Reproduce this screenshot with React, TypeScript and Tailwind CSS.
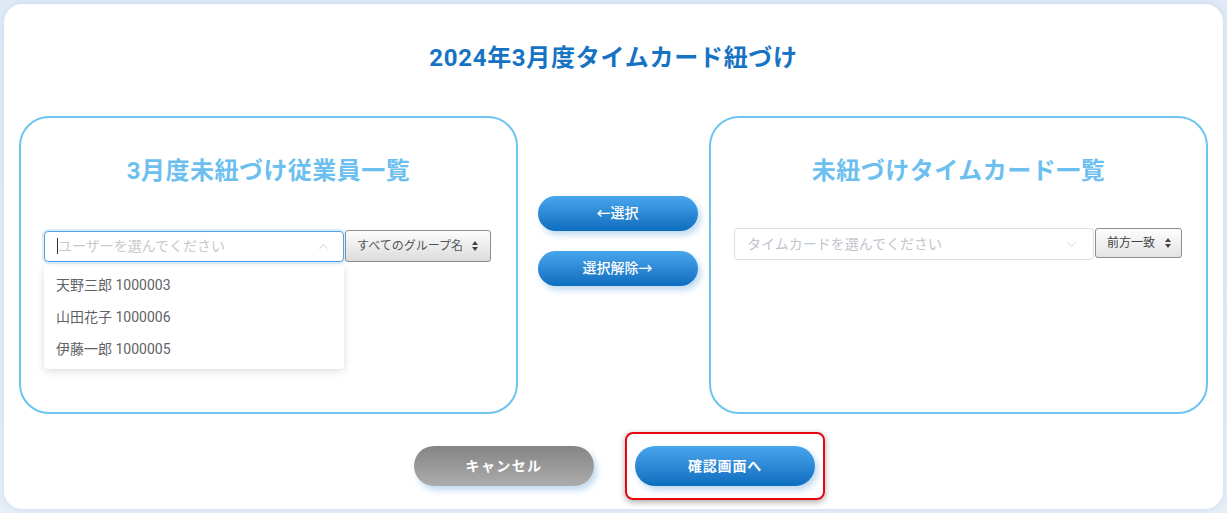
import { ChevronDown, ChevronUp } from "lucide-react";

const font = { fontFamily: "Roboto, 'Noto Sans CJK JP', sans-serif" };

const users = [
  { name: "天野三郎", id: "1000003" },
  { name: "山田花子", id: "1000006" },
  { name: "伊藤一郎", id: "1000005" },
];

function Updown() {
  return (
    <span className="flex flex-col items-center gap-[2px] text-[#444]">
      <span className="block h-0 w-0 border-x-[3.5px] border-b-[4px] border-x-transparent border-b-current" />
      <span className="block h-0 w-0 border-x-[3.5px] border-t-[4px] border-x-transparent border-t-current" />
    </span>
  );
}

function BlueButton({ label, wide = false }: { label: string; wide?: boolean }) {
  return (
    <button
      className={`flex items-center justify-center rounded-full bg-gradient-to-b from-[#48a6ec] to-[#0b6dbf] text-white shadow-[3px_4px_6px_rgba(110,170,220,0.45)] ${
        wide ? "h-[40px] w-[180px] text-[14px] font-bold tracking-[0.06em]" : "h-[35px] w-[160px] text-[14px] font-medium"
      }`}
    >
      {label}
    </button>
  );
}

export default function App() {
  return (
    <div
      className="h-[513px] w-[1227px] bg-gradient-to-b from-[#dfeaf6] to-[#e6eff8] p-[4px]"
      style={font}
    >
      <div className="flex h-[505px] flex-col rounded-[18px] bg-white px-[15px] shadow-[0_0_6px_rgba(180,205,230,0.6)]">
        <h1 className="pt-[39px] text-center text-[24px] leading-[30px] font-bold tracking-[0.03em] text-[#1673c4]">
          2024年3月度タイムカード紐づけ
        </h1>

        <div className="mt-[43px] flex h-[298px] items-stretch">
          {/* left panel */}
          <section className="relative w-[499px] rounded-[30px] border-2 border-[#6cc4ef] px-[23px]">
            <h2 className="pt-[37px] text-center text-[24px] leading-[32px] font-bold tracking-[0.02em] text-[#6cbfee]">
              3月度未紐づけ従業員一覧
            </h2>
            <div className="mt-[43px] flex items-center">
              <div className="relative w-[300px]">
                <div className="flex h-[31px] items-center rounded-[4px] border border-[#4aa2ea] pl-[12px] pr-[12px] shadow-[0_0_0_2px_rgba(74,162,234,0.18)]">
                  <span className="h-[16px] w-px bg-[#333]" />
                  <span className="flex-1 text-[14px] text-[#c8c8c8]">ユーザーを選んでください</span>
                  <ChevronUp size={15} strokeWidth={1.1} className="text-[#bbb]" />
                </div>
                <ul className="absolute top-[35px] left-0 z-10 w-[300px] rounded-[4px] bg-white pt-[4px] pb-[3px] shadow-[0_2px_8px_rgba(0,0,0,0.14)]">
                  {users.map((u) => (
                    <li key={u.id} className="flex h-[32px] items-center px-[12px] text-[14px] text-[#606266]">
                      {u.name} {u.id}
                    </li>
                  ))}
                </ul>
              </div>
              <div className="ml-px flex h-[32px] w-[146px] items-center justify-between rounded-[3px] border border-[#8d8d8d] bg-gradient-to-b from-[#fdfdfd] to-[#dcdcdc] pl-[11px] pr-[12px] text-[12px] text-[#555]">
                <span>すべてのグループ名</span>
                <Updown />
              </div>
            </div>
          </section>

          {/* middle buttons */}
          <div className="flex flex-1 flex-col items-center gap-[20px] pt-[80px] pl-[8px]">
            <BlueButton label="←選択" />
            <BlueButton label="選択解除→" />
          </div>

          {/* right panel */}
          <section className="w-[499px] rounded-[30px] border-2 border-[#6cc4ef] px-[23px]">
            <h2 className="pt-[37px] text-center text-[24px] leading-[32px] font-bold tracking-[0.02em] text-[#6cbfee]">
              未紐づけタイムカード一覧
            </h2>
            <div className="mt-[41px] flex items-start">
              <div className="flex h-[32px] w-[360px] items-center rounded-[4px] border border-[#dcdfe6] pl-[12px] pr-[14px]">
                <span className="flex-1 text-[14px] text-[#c0c4cc]">タイムカードを選んでください</span>
                <ChevronDown size={15} strokeWidth={1.1} className="text-[#c0c4cc]" />
              </div>
              <div className="ml-px flex h-[30px] w-[87px] items-center justify-between rounded-[3px] border border-[#8d8d8d] bg-gradient-to-b from-[#fdfdfd] to-[#e4e4e4] pl-[11px] pr-[10px] text-[12px] text-[#444]">
                <span>前方一致</span>
                <Updown />
              </div>
            </div>
          </section>
        </div>

        {/* footer buttons */}
        <div className="mt-[18px] flex items-center justify-center gap-[31px] pl-[12px]">
          <button className="h-[40px] w-[180px] rounded-full bg-gradient-to-b from-[#858585] to-[#acacac] text-[14px] font-bold tracking-[0.1em] text-white shadow-[3px_4px_6px_rgba(110,170,220,0.45)]">
            キャンセル
          </button>
          <div className="rounded-[8px] border-2 border-[#e8060f] px-[8px] py-[12px] shadow-[0_2px_6px_rgba(0,0,0,0.35)]">
            <BlueButton label="確認画面へ" wide />
          </div>
        </div>
      </div>
    </div>
  );
}
